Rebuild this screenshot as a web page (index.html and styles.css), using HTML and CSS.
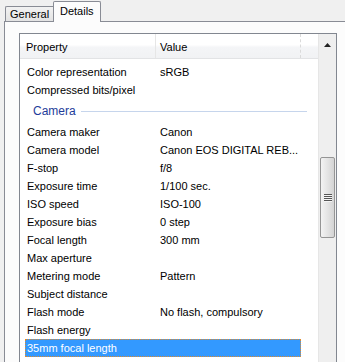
FILE: index.html
```html
<!DOCTYPE html>
<html lang="en">
<head>
  <meta charset="UTF-8" />
  <title>Properties - Details</title>
  <link rel="stylesheet" href="styles.css">
</head>
<body>
  <div class="tabs">
    <div class="tab">General</div>
    <div class="tab active">Details</div>
  </div>

  <div class="panel">
    <div class="listview">
      <div class="list">
        <div class="header">
          <div class="hcell hprop">Property</div>
          <div class="hcell hval">Value</div>
          <div class="hcell hrest"></div>
        </div>

        <div class="rows">
          <div class="row"><span class="prop">Color representation</span><span class="val">sRGB</span></div>
          <div class="row"><span class="prop">Compressed bits/pixel</span><span class="val"></span></div>

          <div class="group"><span>Camera</span><i class="group-line"></i></div>

          <div class="row"><span class="prop">Camera maker</span><span class="val">Canon</span></div>
          <div class="row"><span class="prop">Camera model</span><span class="val">Canon EOS DIGITAL REB...</span></div>
          <div class="row"><span class="prop">F-stop</span><span class="val">f/8</span></div>
          <div class="row"><span class="prop">Exposure time</span><span class="val">1/100 sec.</span></div>
          <div class="row"><span class="prop">ISO speed</span><span class="val">ISO-100</span></div>
          <div class="row"><span class="prop">Exposure bias</span><span class="val">0 step</span></div>
          <div class="row"><span class="prop">Focal length</span><span class="val">300 mm</span></div>
          <div class="row"><span class="prop">Max aperture</span><span class="val"></span></div>
          <div class="row"><span class="prop">Metering mode</span><span class="val">Pattern</span></div>
          <div class="row"><span class="prop">Subject distance</span><span class="val"></span></div>
          <div class="row"><span class="prop">Flash mode</span><span class="val">No flash, compulsory</span></div>
          <div class="row"><span class="prop">Flash energy</span><span class="val"></span></div>
          <div class="row selected"><span class="prop">35mm focal length</span><span class="val"></span></div>
        </div>
      </div>

      <div class="scrollbar">
        <div class="sb-btn">
          <svg width="7" height="4" viewBox="0 0 7 4"><path d="M3.5 0 L7 4 L0 4 Z" fill="#222"/></svg>
        </div>
        <div class="sb-track">
          <div class="thumb">
            <svg width="8" height="8" viewBox="0 0 8 8">
              <path d="M0 0.5h8M0 2.5h8M0 4.5h8M0 6.5h8" stroke="#555" stroke-width="1"/>
              <path d="M0 1.5h8M0 3.5h8M0 5.5h8M0 7.5h8" stroke="#f4f4f4" stroke-width="1"/>
            </svg>
          </div>
        </div>
      </div>
    </div>
  </div>
</body>
</html>
```

FILE: styles.css
```css
* {
  box-sizing: border-box;
  margin: 0;
  padding: 0;
}

body {
  font-family: 'Liberation Sans', Arial, sans-serif;
  font-size: 11px;
  color: #000;
  background: #f0f0f0;
  width: 345px;
  height: 362px;
  overflow: hidden;
}

/* tabs */

.tabs {
  display: flex;
  align-items: flex-end;
  height: 21px;
  padding-left: 5px;
  position: relative;
  z-index: 1;
}

.tab {
  width: 48px;
  height: 15px;
  border: 1px solid #898c95;
  border-right: none;
  border-bottom: none;
  background: linear-gradient(#f2f2f2, #e3e3e3);
  line-height: 14px;
  padding-left: 4px;
  white-space: nowrap;
  border-radius: 2px 0 0 0;
}

.tab.active {
  width: 48px;
  height: 21px;
  margin-bottom: -1px;
  border-right: 1px solid #898c95;
  background: #fcfcfc;
  line-height: 19px;
  padding-left: 6px;
  border-radius: 2px 2px 0 0;
}

/* tab page */

.panel {
  margin-left: 4px;
  width: 360px;
  height: 360px;
  border: 1px solid #898c95;
  background: #fcfcfc;
  padding: 11px 0 0 14px;
}

.listview {
  display: flex;
  width: 318px;
  height: 340px;
  border: 1px solid #828790;
  background: #fff;
  overflow: hidden;
}

.list {
  width: 298px;
}

.header {
  display: flex;
  height: 25px;
  border-bottom: 1px solid #e2e3e5;
  background: linear-gradient(#fff 0, #fff 45%, #f4f5f7 55%, #f1f2f4 100%);
}

.hcell {
  height: 24px;
  line-height: 26px;
}

.hprop {
  width: 136px;
  padding-left: 6px;
  border-right: 1px solid #e6e6e6;
}

.hval {
  width: 145px;
  padding-left: 4px;
  border-right: 1px dashed #dadada;
}

.hrest {
  flex: 1;
}

/* rows */

.rows {
  padding: 4px 0 0 5px;
}

.row {
  display: flex;
  width: 276px;
  height: 18px;
  line-height: 18px;
  white-space: nowrap;
}

.prop {
  width: 133px;
  padding-left: 2px;
  overflow: hidden;
}

.val {
  flex: 1;
  padding-left: 2px;
  overflow: hidden;
}

.row.selected {
  background: #3399ff;
  color: #fff;
  border: 1px dotted #e08a2c;
  line-height: 16px;
}

.row.selected .prop {
  padding-left: 1px;
}

.group {
  display: flex;
  align-items: center;
  width: 282px;
  height: 24px;
  padding-left: 8px;
  color: #1e3c9a;
  font-size: 12px;
}

.group-line {
  flex: 1;
  height: 1px;
  margin-left: 5px;
  background: #c6d5ec;
}

/* scrollbar */

.scrollbar {
  width: 18px;
  display: flex;
  flex-direction: column;
  background: #efefef;
  border-left: 1px solid #e6e6e6;
}

.sb-btn {
  height: 17px;
  display: flex;
  justify-content: center;
  padding-top: 9px;
}

.sb-track {
  flex: 1;
  padding: 106px 0 0 1px;
}

.thumb {
  width: 15px;
  height: 81px;
  border: 1px solid #959595;
  border-radius: 2px;
  background: linear-gradient(90deg, #f3f3f3, #e4e4e4 50%, #d4d4d4);
  display: flex;
  align-items: center;
  justify-content: center;
}
```
